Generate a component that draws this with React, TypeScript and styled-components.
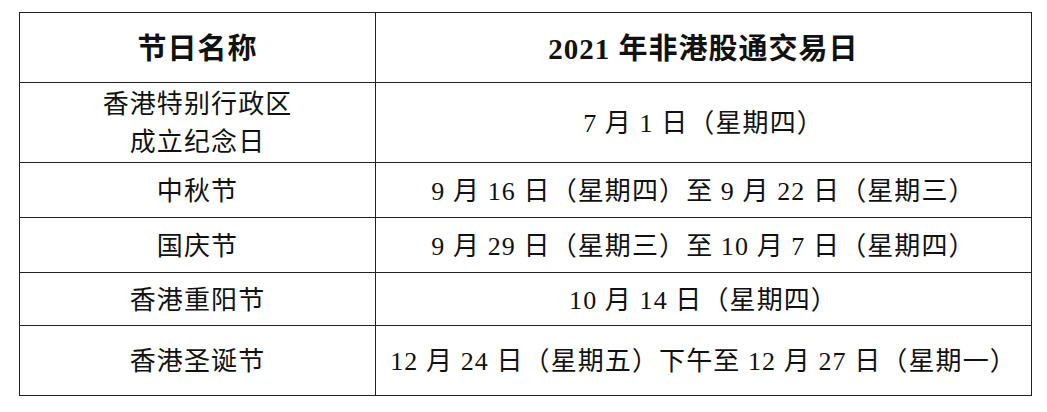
import React from "react";
import styled, { createGlobalStyle } from "styled-components";

type HolidayRow = {
  name: string[];
  dates: string;
  height: number;
};

const rows: HolidayRow[] = [
  { name: ["香港特别行政区", "成立纪念日"], dates: "7 月 1 日（星期四）", height: 79 },
  { name: ["中秋节"], dates: "9 月 16 日（星期四）至 9 月 22 日（星期三）", height: 55 },
  { name: ["国庆节"], dates: "9 月 29 日（星期三）至 10 月 7 日（星期四）", height: 55 },
  { name: ["香港重阳节"], dates: "10 月 14 日（星期四）", height: 53 },
  {
    name: ["香港圣诞节"],
    dates: "12 月 24 日（星期五）下午至 12 月 27 日（星期一）",
    height: 70,
  },
];

export default function App() {
  return (
    <>
      <GlobalStyle />
      <S.Page>
        <S.Table>
          <colgroup>
            <col style={{ width: 356 }} />
            <col style={{ width: 656 }} />
          </colgroup>
          <thead>
            <S.Row $height={70}>
              <S.HeadCell>节日名称</S.HeadCell>
              <S.HeadCell>2021 年非港股通交易日</S.HeadCell>
            </S.Row>
          </thead>
          <tbody>
            {rows.map((row) => (
              <S.Row key={row.dates} $height={row.height}>
                <S.Cell>
                  {row.name.map((line) => (
                    <S.Line key={line}>{line}</S.Line>
                  ))}
                </S.Cell>
                <S.Cell>{row.dates}</S.Cell>
              </S.Row>
            ))}
          </tbody>
        </S.Table>
      </S.Page>
    </>
  );
}

const GlobalStyle = createGlobalStyle`
  body {
    margin: 0;
    background: #ffffff;
  }
`;

const S = {
  Page: styled.div`
    padding: 12px 0 0 19px;
    width: 1047px;
    height: 412px;
    box-sizing: border-box;
    background: #ffffff;
  `,
  Table: styled.table`
    width: 1012px;
    border-collapse: collapse;
    table-layout: fixed;
    color: #111111;
    font-family: "Liberation Serif", "Noto Sans CJK SC", serif;
  `,
  Row: styled.tr<{ $height: number }>`
    height: ${(p) => p.$height}px;
  `,
  HeadCell: styled.th`
    border: 1px solid #222222;
    padding: 0 0 3px;
    text-align: center;
    vertical-align: middle;
    font-size: 29px;
    font-weight: 700;
    letter-spacing: 1px;
  `,
  Cell: styled.td`
    border: 1px solid #222222;
    padding: 3px 0 0;
    text-align: center;
    vertical-align: middle;
    font-size: 26px;
    font-weight: 400;
    letter-spacing: 1.1px;
    line-height: 38px;
  `,
  Line: styled.div`
    white-space: nowrap;
  `,
};
